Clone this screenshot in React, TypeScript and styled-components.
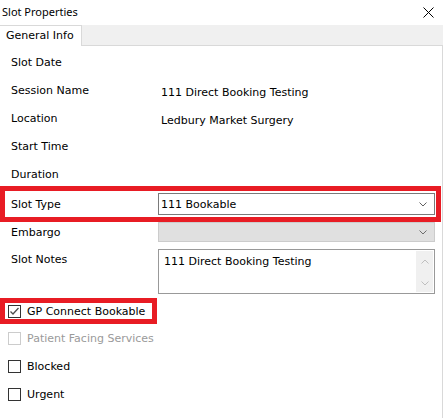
import React from "react";
import styled, { createGlobalStyle } from "styled-components";

const RED = "#e81c24";

const Global = createGlobalStyle`
  html, body { margin: 0; padding: 0; background: #ffffff; }
  * { box-sizing: border-box; }
`;

const Window = styled.div`
  width: 443px;
  height: 418px;
  background: #ffffff;
  display: flex;
  flex-direction: column;
  font-family: "DejaVu Sans", sans-serif;
  font-size: 11px;
  color: #000000;
  overflow: hidden;
`;

const TitleBar = styled.div`
  height: 25px;
  display: flex;
  align-items: center;
  justify-content: space-between;
  padding: 0 9px 1px 2px;
`;

const Title = styled.span`
  font-family: "Noto Sans", sans-serif;
  font-size: 11px;
  line-height: 14px;
`;

const CloseButton = styled.svg`
  width: 11px;
  height: 11px;
  display: block;
`;

const TabStrip = styled.div`
  height: 21px;
  background: #f0f0f0;
  border-bottom: 1px solid #d9d9d9;
  display: flex;
  align-items: stretch;
`;

const Tab = styled.div`
  width: 82px;
  margin-bottom: -1px;
  background: #ffffff;
  border-top: 1px solid #d9d9d9;
  border-right: 1px solid #d9d9d9;
  display: flex;
  align-items: center;
  padding: 0 0 1px 6px;
`;

const Panel = styled.div`
  flex: 1;
  border-right: 1px solid #d9d9d9;
  display: flex;
  flex-direction: column;
  padding-top: 2px;
`;

const InfoRow = styled.div`
  height: 28px;
  display: grid;
  grid-template-columns: 161px 1fr;
  align-items: center;
`;

const Label = styled.span`
  padding-left: 11px;
  line-height: 13px;
  white-space: nowrap;
`;

const Value = styled.span`
  margin-top: 5px;
  line-height: 13px;
  white-space: nowrap;
`;

const Highlight = styled.div<{ $width: number }>`
  width: ${(p) => p.$width}px;
  border: 5px solid ${RED};
`;

const SlotTypeBox = styled(Highlight)`
  margin-top: -2px;
  display: grid;
  grid-template-columns: 153px 277px;
  align-items: center;
  padding: 2px 0;
`;

const BoxLabel = styled.span`
  padding-left: 6px;
  line-height: 13px;
`;

const Combo = styled.div<{ $disabled?: boolean }>`
  height: ${(p) => (p.$disabled ? 20 : 22)}px;
  border: 1px solid ${(p) => (p.$disabled ? "#cccccc" : "#7a7a7a")};
  background: ${(p) => (p.$disabled ? "#e0e0e0" : "#ffffff")};
  display: flex;
  align-items: center;
  justify-content: space-between;
  padding: 0 7px 0 2px;
  line-height: 13px;
`;

const Chevron = styled.svg<{ $color?: string }>`
  width: 8px;
  height: 5px;
  display: block;
  color: ${(p) => p.$color ?? "#606060"};
`;

const FieldRow = styled.div<{ $top?: number }>`
  display: grid;
  grid-template-columns: 158px 277px;
  margin-top: ${(p) => p.$top ?? 0}px;
`;

const FieldLabel = styled.span<{ $pad?: number }>`
  padding-left: 11px;
  padding-top: ${(p) => p.$pad ?? 0}px;
  align-self: ${(p) => (p.$pad !== undefined ? "start" : "center")};
  line-height: 13px;
`;

const NotesBox = styled.div`
  height: 45px;
  border: 1px solid #999999;
  display: flex;
  justify-content: space-between;
  padding: 0 1px 0 0;
`;

const NotesText = styled.span`
  padding: 5px 0 0 5px;
  line-height: 13px;
`;

const ScrollBar = styled.div`
  width: 17px;
  margin: 1px 0;
  background: #f0f0f0;
  display: flex;
  flex-direction: column;
  align-items: center;
  justify-content: space-between;
  padding: 8px 0 6px;
`;

const GpBox = styled(Highlight)`
  margin-top: 4px;
  height: 26px;
  display: flex;
  align-items: center;
  gap: 6px;
  padding-left: 3px;
`;

const CheckRow = styled.div<{ $disabled?: boolean }>`
  height: 28px;
  display: flex;
  align-items: center;
  gap: 6px;
  padding-left: 8px;
  color: ${(p) => (p.$disabled ? "#9a9a9a" : "#000000")};
`;

const Box = styled.span<{ $disabled?: boolean }>`
  width: 13px;
  height: 13px;
  border: 1px solid ${(p) => (p.$disabled ? "#cccccc" : "#333333")};
  background: #ffffff;
  display: flex;
  align-items: center;
  justify-content: center;
  flex-shrink: 0;
`;

const CheckText = styled.span`
  line-height: 13px;
  white-space: nowrap;
`;

const Down = ({ color }: { color?: string }) => (
  <Chevron viewBox="0 0 8 5" $color={color}>
    <polyline points="0.5,0.5 4,4 7.5,0.5" fill="none" stroke="currentColor" strokeWidth="1" />
  </Chevron>
);

const Up = ({ color }: { color?: string }) => (
  <Chevron viewBox="0 0 8 5" $color={color}>
    <polyline points="0.5,4.5 4,1 7.5,4.5" fill="none" stroke="currentColor" strokeWidth="1" />
  </Chevron>
);

const Checkbox = ({ checked, disabled }: { checked?: boolean; disabled?: boolean }) => (
  <Box $disabled={disabled}>
    {checked && (
      <svg width="11" height="11" viewBox="0 0 11 11">
        <polyline points="1.5,5.5 4,8 9.5,2" fill="none" stroke="#4d4d4d" strokeWidth="1.3" />
      </svg>
    )}
  </Box>
);

export default function App() {
  return (
    <>
      <Global />
      <Window>
        <TitleBar>
          <Title>Slot Properties</Title>
          <CloseButton viewBox="0 0 11 11">
            <path d="M0.5 0.5 L10.5 10.5 M10.5 0.5 L0.5 10.5" stroke="#000" strokeWidth="1" fill="none" />
          </CloseButton>
        </TitleBar>
        <TabStrip>
          <Tab>General Info</Tab>
        </TabStrip>
        <Panel>
          <InfoRow>
            <Label>Slot Date</Label>
            <span />
          </InfoRow>
          <InfoRow>
            <Label>Session Name</Label>
            <Value>111 Direct Booking Testing</Value>
          </InfoRow>
          <InfoRow>
            <Label>Location</Label>
            <Value>Ledbury Market Surgery</Value>
          </InfoRow>
          <InfoRow>
            <Label>Start Time</Label>
            <span />
          </InfoRow>
          <InfoRow>
            <Label>Duration</Label>
            <span />
          </InfoRow>
          <SlotTypeBox $width={441}>
            <BoxLabel>Slot Type</BoxLabel>
            <Combo>
              <span>111 Bookable</span>
              <Down />
            </Combo>
          </SlotTypeBox>
          <FieldRow>
            <FieldLabel>Embargo</FieldLabel>
            <Combo $disabled>
              <span />
              <Down color="#6d6d6d" />
            </Combo>
          </FieldRow>
          <FieldRow $top={7}>
            <FieldLabel $pad={4}>Slot Notes</FieldLabel>
            <NotesBox>
              <NotesText>111 Direct Booking Testing</NotesText>
              <ScrollBar>
                <Up color="#bfbfbf" />
                <Down color="#bfbfbf" />
              </ScrollBar>
            </NotesBox>
          </FieldRow>
          <GpBox $width={157}>
            <Checkbox checked />
            <CheckText>GP Connect Bookable</CheckText>
          </GpBox>
          <CheckRow $disabled>
            <Checkbox disabled />
            <CheckText>Patient Facing Services</CheckText>
          </CheckRow>
          <CheckRow>
            <Checkbox />
            <CheckText>Blocked</CheckText>
          </CheckRow>
          <CheckRow>
            <Checkbox />
            <CheckText>Urgent</CheckText>
          </CheckRow>
        </Panel>
      </Window>
    </>
  );
}
